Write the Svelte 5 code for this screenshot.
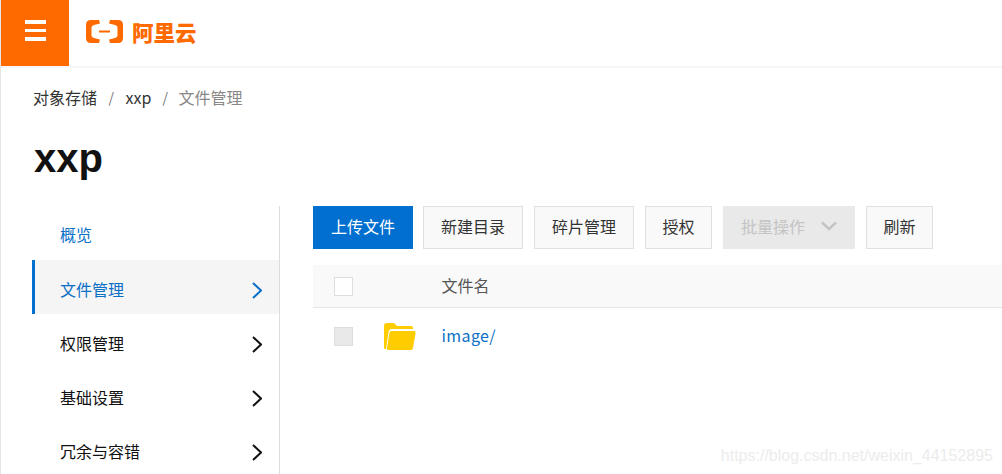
<script>
	const menu = [
		{ label: '概览', arrow: false, tone: 'link' },
		{ label: '文件管理', arrow: true, tone: 'active' },
		{ label: '权限管理', arrow: true, tone: '' },
		{ label: '基础设置', arrow: true, tone: '' },
		{ label: '冗余与容错', arrow: true, tone: '' }
	];
	const actions = ['新建目录', '碎片管理', '授权'];
</script>

<div class="page">
	<header class="topbar">
		<button class="burger" aria-label="menu">
			<span></span><span></span><span></span>
		</button>
		<div class="logo">
			<svg width="39" height="25" viewBox="0 0 39 25">
				<path d="M14 1H6Q1 1 1 6V19Q1 24 6 24H14L15 20.500L9 19Q6.500 18.400 6.500 16.500V8.500Q6.500 6.600 9 6L15 4.500Z" fill="#ff6a00" />
				<path d="M25 1H33Q38 1 38 6V19Q38 24 33 24H25L24 20.500L30 19Q32.500 18.400 32.500 16.500V8.500Q32.500 6.600 30 6L24 4.500Z" fill="#ff6a00" />
				<rect x="14" y="11.500" width="11" height="2" fill="#ff6a00" />
			</svg>
			<span>阿里云</span>
		</div>
	</header>

	<main class="content">
		<nav class="crumbs">
			<span>对象存储</span><i>/</i><span>xxp</span><i class="last">/</i><span class="current">文件管理</span>
		</nav>
		<h1>xxp</h1>

		<div class="body">
			<aside class="side">
				{#each menu as item}
					<div class="side__item {item.tone}">
						<span>{item.label}</span>
						{#if item.arrow}
							<svg class="chev" width="10" height="17" viewBox="0 0 10 17">
								<path d="M1 1l8 7.500-8 7.500" fill="none" stroke="currentColor" stroke-width="2" />
							</svg>
						{/if}
					</div>
				{/each}
			</aside>

			<section class="main">
				<div class="toolbar">
					<button class="btn primary">上传文件</button>
					{#each actions as a}
						<button class="btn" class:short={a.length < 4}>{a}</button>
					{/each}
					<button class="btn disabled">
						批量操作
						<svg width="16" height="10" viewBox="0 0 16 10">
							<path d="M1 1.500l7 6.500 7-6.500" fill="none" stroke="currentColor" stroke-width="2.400" />
						</svg>
					</button>
					<button class="btn short">刷新</button>
				</div>

				<div class="row head">
					<div class="check"></div>
					<div class="icon"></div>
					<div class="label">文件名</div>
				</div>
				<div class="row file">
					<div class="check off"></div>
					<div class="icon">
						<svg width="33" height="29" viewBox="0 0 33 29">
							<path d="M1 4Q1 1 4 1H10Q12 1 13 3L14 4H28Q30 4 30 6V7H9Q6 7 5.500 10L3 27H2Q1 27 1 26Z" fill="#ffcc00" />
							<path d="M8 9H31Q33 9 32.600 11L30 26Q29.600 28 28 28H5Q3.500 28 4 26L6.500 10.500Q6.800 9 8 9Z" fill="#ffcc00" />
						</svg>
					</div>
					<a class="label" href="#image">image/</a>
				</div>
			</section>
		</div>
	</main>

	<div class="watermark">https://blog.csdn.net/weixin_44152895</div>
</div>

<style>
	:global(body) {
		margin: 0;
		background: #fff;
		overflow: hidden;
	}

	.page {
		position: relative;
		height: 474px;
		overflow: hidden;
		box-sizing: border-box;
		border-left: 1px solid #e6e6e6;
		font-family: "Noto Sans CJK SC", "Liberation Sans", sans-serif;
		font-size: 16px;
		color: #333;
	}

	.topbar {
		display: flex;
		align-items: center;
		height: 66px;
		border-bottom: 2px solid #f6f6f6;
	}

	.burger {
		display: flex;
		flex-direction: column;
		justify-content: center;
		align-items: center;
		gap: 5px;
		width: 68px;
		height: 66px;
		padding: 0 0 5px;
		border: 0;
		background: #ff6a00;
	}

	.burger span {
		width: 21px;
		height: 3.500px;
		background: #fff;
	}

	.logo {
		display: flex;
		align-items: center;
		gap: 8px;
		margin-left: 16px;
		margin-top: -3px;
		color: #ff6a00;
		font-size: 21.500px;
		font-weight: 900;
		line-height: 30px;
	}

	.content {
		padding-left: 31px;
	}

	.crumbs {
		display: flex;
		align-items: center;
		height: 24px;
		margin-top: 17px;
		margin-left: 1px;
		color: #333;
		line-height: 24px;
	}

	.crumbs i {
		margin: 0 11.500px;
		color: #777;
		font-style: normal;
		font-size: 14px;
	}

	.crumbs i.last {
		margin: 0 10.500px 0 11px;
	}

	.crumbs .current {
		color: #888;
	}

	h1 {
		height: 50px;
		margin: 27px 0 0 2px;
		color: #111;
		font-family: "Liberation Sans", sans-serif;
		font-size: 40px;
		font-weight: 700;
		line-height: 44px;
	}

	.body {
		display: flex;
		margin-top: 20px;
	}

	.side {
		flex: none;
		width: 247px;
		height: 280px;
		border-right: 1px solid #ddd;
		box-sizing: content-box;
	}

	.side__item {
		display: flex;
		align-items: center;
		justify-content: space-between;
		height: 54px;
		padding: 4px 17px 0 25px;
		border-left: 3px solid transparent;
		color: #111;
		box-sizing: border-box;
	}

	.side__item.link {
		padding-top: 2px;
		color: #0b6fc6;
	}

	.side__item.active {
		border-left-color: #006fd0;
		background: #f5f5f5;
		color: #0b6fc6;
	}

	.chev {
		margin-top: 3px;
	}

	.main {
		flex: 1;
		margin-left: 33px;
	}

	.toolbar {
		display: flex;
		gap: 11px;
		height: 43px;
	}

	.btn {
		display: flex;
		align-items: center;
		justify-content: center;
		gap: 16px;
		padding: 0 17px 4px;
		border: 1px solid #e0e0e0;
		background: #f9f9f9;
		color: #333;
		font: inherit;
		white-space: nowrap;
	}

	.btn.short {
		padding-inline: 16.500px;
	}

	.btn.primary {
		margin-right: -1px;
		border-color: #006fd0;
		background: #006fd0;
		color: #fff;
	}

	.btn.disabled {
		border-color: #e9e9e9;
		background: #e9e9e9;
		color: #c4c4c4;
	}

	.row {
		display: flex;
		align-items: center;
		padding-left: 21px;
	}

	.row .label {
		margin-top: -2px;
		margin-left: -0.500px;
	}

	.row.head {
		height: 42px;
		margin-top: 16px;
		border-bottom: 1px solid #e6e6e6;
		background: #f9f9f9;
		color: #555;
	}

	.row.file {
		height: 56px;
	}

	.check {
		flex: none;
		width: 19px;
		height: 19px;
		box-sizing: border-box;
		border: 1px solid #ddd;
		background: #fff;
	}

	.check.off {
		background: #e9e9e9;
	}

	.icon {
		display: flex;
		flex: none;
		width: 89px;
		padding-left: 30px;
		box-sizing: border-box;
	}

	a {
		color: #0b6fc6;
		letter-spacing: 0.400px;
		text-decoration: none;
	}

	.watermark {
		position: absolute;
		right: 9px;
		bottom: 9px;
		color: #ececec;
		font-family: "Liberation Sans", sans-serif;
		font-size: 16px;
	}
</style>
